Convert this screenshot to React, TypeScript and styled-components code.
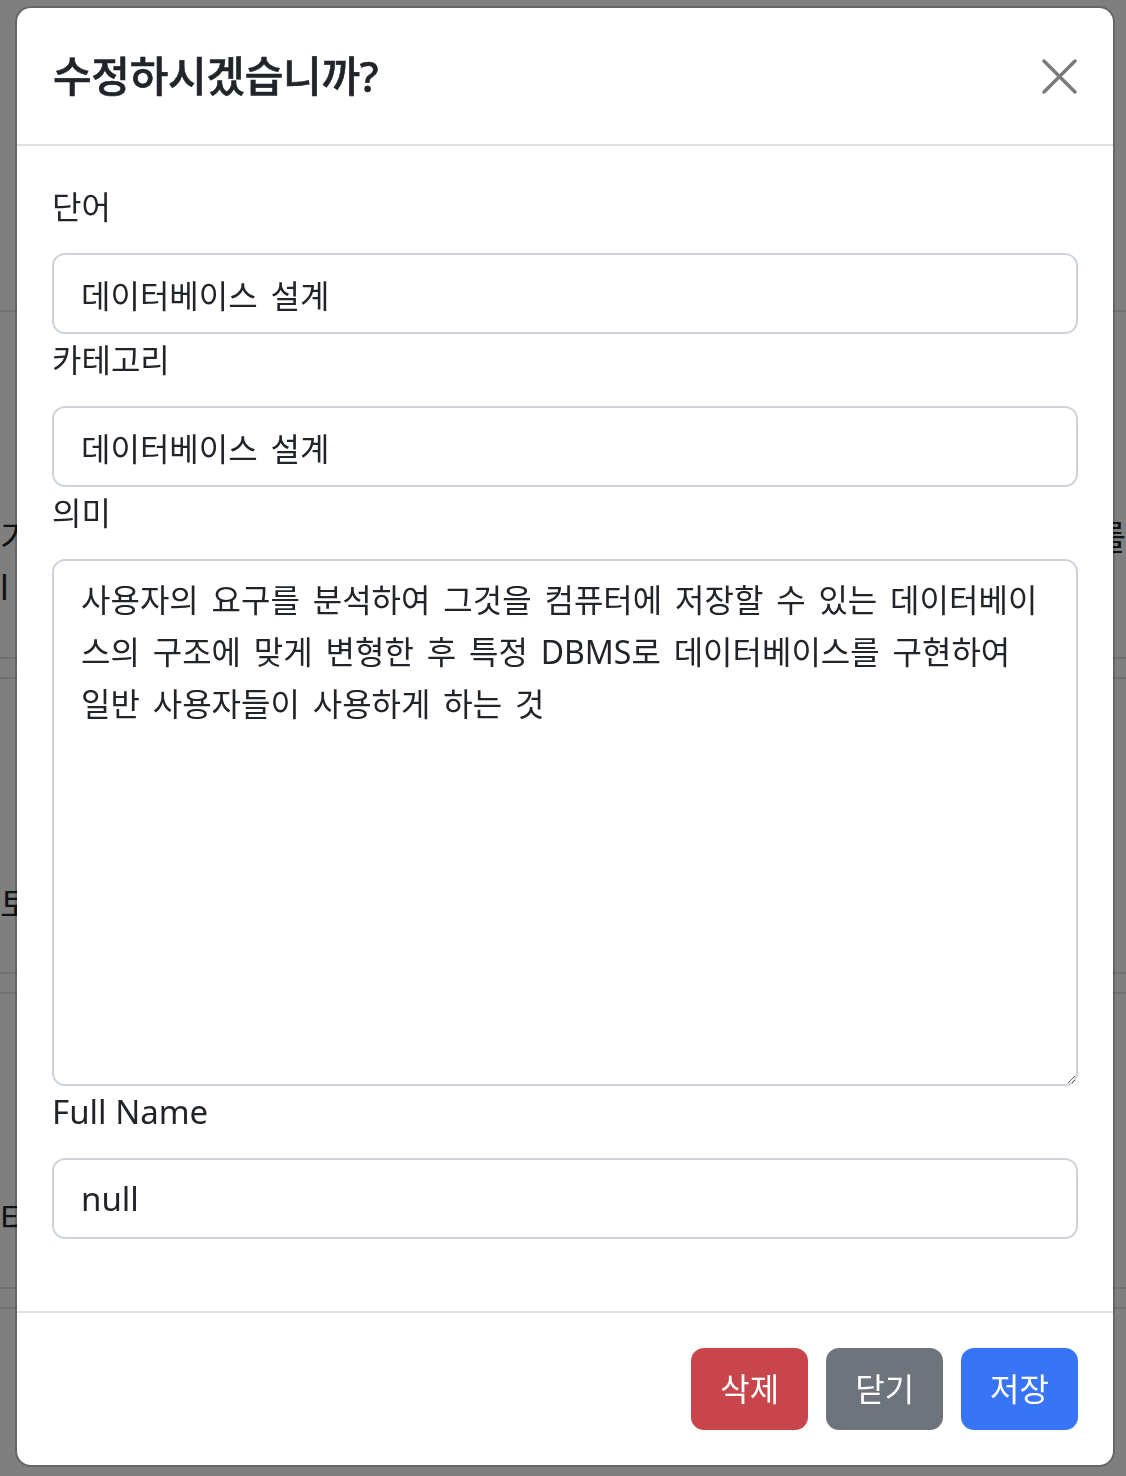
import React from "react";
import styled, { createGlobalStyle } from "styled-components";

const GlobalStyle = createGlobalStyle`
  html,
  body {
    margin: 0;
    padding: 0;
    background: #ffffff;
  }

  body {
    font-family: "Noto Sans", "Noto Sans CJK KR", sans-serif;
    color: #212529;
  }

  *,
  *::before,
  *::after {
    box-sizing: border-box;
  }
`;

/* page behind the backdrop */
const Page = styled.div`
  min-height: 1476px;
  padding-top: 310px;
  font-size: 34px;
  color: #212529;
`;

const ListItem = styled.div<{ $height: number }>`
  height: ${(p) => p.$height}px;
  border-top: 2px solid #dee2e6;
  border-bottom: 2px solid #dee2e6;
  margin-bottom: 18px;
  display: flex;
  justify-content: space-between;
`;

const ItemText = styled.div<{ $top: number }>`
  padding-top: ${(p) => p.$top}px;
  line-height: 50px;
`;

/* modal */
const Backdrop = styled.div`
  position: fixed;
  inset: 0;
  background: rgba(0, 0, 0, 0.5);
  padding: 6px 11px 0 15px;
`;

const Modal = styled.div`
  width: 1100px;
  background: #ffffff;
  background-clip: padding-box;
  border: 2px solid rgba(0, 0, 0, 0.2);
  border-radius: 16px;
  display: flex;
  flex-direction: column;
`;

const Header = styled.div`
  display: flex;
  align-items: center;
  padding: 36px;
  border-bottom: 2px solid #dee2e6;
`;

const Title = styled.h5`
  margin: 0;
  font-size: 42px;
  line-height: 64px;
  font-weight: 500;
  letter-spacing: -0.3px;
  -webkit-text-stroke: 0.6px #212529;
  color: #212529;
`;

const CloseButton = styled.button`
  margin-left: auto;
  width: 35px;
  height: 35px;
  padding: 0;
  border: 0;
  background: none;
  cursor: pointer;
  display: flex;

  svg {
    width: 35px;
    height: 35px;
  }
`;

const Body = styled.div`
  padding: 35px 35px 72px;
`;

const Label = styled.label<{ $latin?: boolean }>`
  display: block;
  font-size: ${(p) => (p.$latin ? 33 : 32)}px;
  line-height: 52px;
  margin-bottom: 20px;
`;

const Input = styled.input<{ $latin?: boolean }>`
  display: block;
  width: 100%;
  height: 81px;
  padding: 0 32px 0 27px;
  border: 2px solid #ced4da;
  border-radius: 13px;
  font-family: inherit;
  font-size: ${(p) => (p.$latin ? 33 : 32)}px;
  word-spacing: 4.5px;
  color: #212529;
  background: #ffffff;
  outline: none;
`;

const TextArea = styled.textarea`
  display: block;
  width: 100%;
  height: 527px;
  padding: 13px 32px 13px 27px;
  border: 2px solid #ced4da;
  border-radius: 13px;
  font-family: inherit;
  font-size: 32px;
  line-height: 52px;
  word-spacing: 4.5px;
  color: #212529;
  background: #ffffff;
  resize: vertical;
  outline: none;
`;

const Footer = styled.div`
  display: flex;
  justify-content: flex-end;
  gap: 18px;
  padding: 35px;
  border-top: 2px solid #dee2e6;
`;

const Button = styled.button<{ $color: string }>`
  height: 82px;
  padding: 0 27px;
  border: 2px solid ${(p) => p.$color};
  border-radius: 13px;
  background: ${(p) => p.$color};
  color: #ffffff;
  font-family: inherit;
  font-size: 32px;
  line-height: 1;
  cursor: pointer;
`;

const meaning =
  "사용자의 요구를 분석하여 그것을 컴퓨터에 저장할 수 있는 데이터베이스의 구조에 맞게 변형한 후 특정 DBMS로 데이터베이스를 구현하여 일반 사용자들이 사용하게 하는 것";

export default function App() {
  return (
    <>
      <GlobalStyle />
      <Page>
        <ListItem $height={349}>
          <ItemText $top={200}>
            기록
            <br />
            l
          </ItemText>
          <ItemText $top={200}>를</ItemText>
        </ListItem>
        <ListItem $height={297}>
          <ItemText $top={200}>토C</ItemText>
        </ListItem>
        <ListItem $height={297}>
          <ItemText $top={200}>터</ItemText>
        </ListItem>
        <ListItem $height={200} />
      </Page>

      <Backdrop>
        <Modal role="dialog" aria-modal="true">
          <Header>
            <Title>수정하시겠습니까?</Title>
            <CloseButton aria-label="Close">
              <svg viewBox="0 0 35 35" fill="none">
                <path
                  d="M2 2L33 33M33 2L2 33"
                  stroke="#7a7a7a"
                  strokeWidth="3.4"
                  strokeLinecap="round"
                />
              </svg>
            </CloseButton>
          </Header>

          <Body>
            <Label>단어</Label>
            <Input defaultValue="데이터베이스 설계" />
            <Label>카테고리</Label>
            <Input defaultValue="데이터베이스 설계" />
            <Label>의미</Label>
            <TextArea defaultValue={meaning} />
            <Label $latin>Full Name</Label>
            <Input $latin defaultValue="null" />
          </Body>

          <Footer>
            <Button $color="#c8464b">삭제</Button>
            <Button $color="#6e747b">닫기</Button>
            <Button $color="#3874f6">저장</Button>
          </Footer>
        </Modal>
      </Backdrop>
    </>
  );
}
